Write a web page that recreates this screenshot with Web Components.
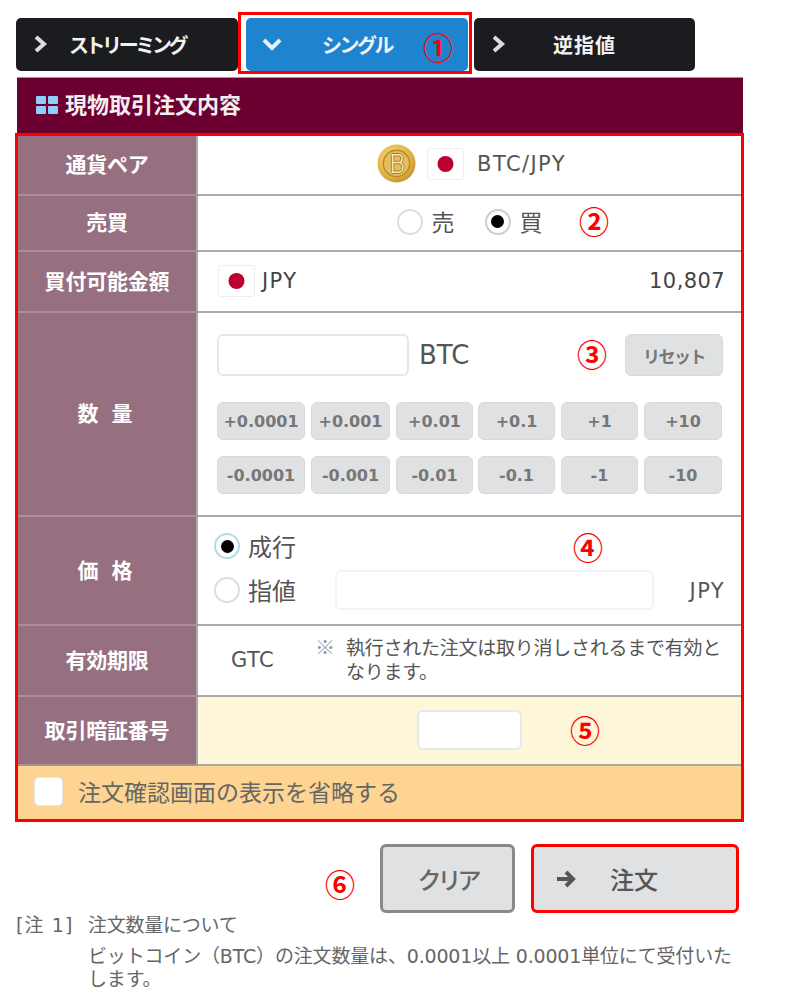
<!DOCTYPE html>
<html lang="ja">
<head>
<meta charset="utf-8">
<title>現物取引注文内容</title>
<style>
  html, body { margin: 0; background: #fff; }
  body { font-family: "DejaVu Sans", "Noto Sans CJK JP", sans-serif; color: #444; width: 800px; height: 990px; overflow: hidden; }
</style>
</head>
<body>
<order-page></order-page>

<script>
const FONT = `"DejaVu Sans", "Noto Sans CJK JP", sans-serif`;
const FLAG = `<svg width="37" height="32" viewBox="0 0 37 32" style="flex:none"><rect x=".5" y=".5" width="36" height="31" rx="2" fill="#fff" stroke="#eee"/><circle cx="18.5" cy="16" r="8" fill="#bc0030"/></svg>`;

class NumMark extends HTMLElement {
  constructor() {
    super();
    this.attachShadow({ mode: "open" });
    this.shadowRoot.innerHTML = `
      <style>
        :host { display: inline-flex; width: 30px; height: 30px; align-items: center; justify-content: center; color: #f00;
          font: 700 30px/30px "Noto Sans CJK JP", sans-serif; flex: none; }
      </style>
      <slot></slot>`;
  }
}
customElements.define("num-mark", NumMark);

class TabButton extends HTMLElement {
  constructor() {
    super();
    this.attachShadow({ mode: "open" });
  }
  connectedCallback() {
    const active = this.hasAttribute("active");
    this.shadowRoot.innerHTML = `
      <style>
        :host { display: block; height: 53px; box-sizing: border-box; border-radius: 5px; background: ${active ? "#1f84d0" : "#1b1c1f"};
          color: #f2f2f2; font: 700 20px/53px "Noto Sans CJK JP", sans-serif; position: relative; }
        svg { position: absolute; left: 17px; top: 17px; }
        .label { position: absolute; left: 0; right: 0; top: 0; text-align: center; letter-spacing: var(--ls, -2.5px); }
      </style>
      ${active
        ? `<svg style="left:15px;top:19px" width="22" height="16" viewBox="0 0 22 16"><path d="M3 3l8 8 8-8" fill="none" stroke="#e6f2fb" stroke-width="4"/></svg>`
        : `<svg width="16" height="18" viewBox="0 0 16 18"><path d="M3 2l8 7-8 7" fill="none" stroke="#ddd" stroke-width="4"/></svg>`}
      <span class="label"><slot></slot></span>`;
  }
}
customElements.define("tab-button", TabButton);

class FormRow extends HTMLElement {
  constructor() {
    super();
    this.attachShadow({ mode: "open" });
  }
  connectedCallback() {
    this.shadowRoot.innerHTML = `
      <style>
        :host { display: grid; grid-template-columns: 180px 1fr; box-sizing: border-box; border-bottom: 2px solid #aaa; height: var(--h); }
        .th { background: #967080; color: #fff; font: 700 21px/1.2 "Noto Sans CJK JP", sans-serif; display: flex; align-items: center;
          justify-content: center; border-right: 2px solid #aaa; box-shadow: 0 2px 0 #ab8e9a; letter-spacing: var(--ls, -.2px); padding-bottom: 2px; }
        .td { min-width: 0; position: relative; background: var(--bg, #fff); }
      </style>
      <div class="th">${this.getAttribute("label")}</div>
      <div class="td"><slot></slot></div>`;
  }
}
customElements.define("form-row", FormRow);

class RadioDot extends HTMLElement {
  constructor() {
    super();
    this.attachShadow({ mode: "open" });
  }
  connectedCallback() {
    const on = this.hasAttribute("checked");
    const ring = this.getAttribute("ring") || (on ? "#ccc" : "#ddd");
    this.shadowRoot.innerHTML = `
      <style>
        :host { display: inline-flex; width: 26px; height: 26px; box-sizing: border-box; border: 2px solid ${ring}; border-radius: 50%;
          background: #fff; align-items: center; justify-content: center; flex: none; }
        i { width: 13px; height: 13px; border-radius: 50%; background: #000; display: ${on ? "block" : "none"}; }
      </style>
      <i></i>`;
  }
}
customElements.define("radio-dot", RadioDot);

class StepButton extends HTMLElement {
  constructor() {
    super();
    this.attachShadow({ mode: "open" });
    this.shadowRoot.innerHTML = `
      <style>
        :host { display: flex; align-items: center; justify-content: center; height: 38px; box-sizing: border-box; background: #e0e1e3;
          border: 1px solid #d8d9db; border-radius: 6px; color: #777; font: 700 16px/1 "DejaVu Sans", sans-serif; padding-top: 2px; }
      </style>
      <slot></slot>`;
  }
}
customElements.define("step-button", StepButton);

class TextBox extends HTMLElement {
  constructor() {
    super();
    this.attachShadow({ mode: "open" });
    this.shadowRoot.innerHTML = `
      <style>
        :host { display: block; box-sizing: border-box; background: #fff; border: 2px solid var(--line, #e8e8e8); border-radius: 6px; flex: none; }
      </style>`;
  }
}
customElements.define("text-box", TextBox);

class OrderPage extends HTMLElement {
  constructor() {
    super();
    this.attachShadow({ mode: "open" });
    this.shadowRoot.innerHTML = `
      <style>
        :host { display: block; padding: 18px 0 0 16px; position: relative; width: 784px; height: 972px; color: #444; font-family: ${FONT}; }
        .tabs { display: grid; grid-template-columns: 222px 222px 219px; column-gap: 8px; width: 680px; }
        .tabs tab-button:nth-child(3) { margin-left: -2px; }
        .head { margin: 6px 0 0 1px; width: 726px; height: 56px; box-sizing: border-box; background: #6b0030; border-top: 1px solid #999;
          color: #f4eef1; display: flex; align-items: center; padding: 0 0 2px 18px; gap: 6px; font: 700 22px/1 "Noto Sans CJK JP", sans-serif; }
        .head svg { flex: none; }
        .head span { margin-top: -3px; }
        .panel { margin: 0 0 0 -1px; width: 729px; box-sizing: border-box; border: 3px solid #f00; }
        .center { height: 100%; display: flex; align-items: center; justify-content: center; }
        .pair { padding-left: 4px; padding-bottom: 3px; box-sizing: border-box; font-size: 21px; letter-spacing: 1.4px; color: #555; }
        .pair svg:first-child { margin-right: 11px; }
        .pair span { margin-left: 13px; }
        .side { font: 400 23px/1 "Noto Sans CJK JP", sans-serif; color: #555; padding-bottom: 3px; box-sizing: border-box; }
        .side span { margin: 0 30px 0 9px; }
        .side span:last-child { margin-right: 0; }
        .avail { height: 100%; box-sizing: border-box; display: flex; align-items: center; padding: 0 16px 2px 20px; font-size: 21px; color: #444; }
        .avail span:first-of-type { margin-left: 7px; flex: 1; letter-spacing: 1.4px; }
        .avail span:last-of-type { letter-spacing: .4px; }
        .qty { padding: 21px 18px 0 19px; }
        .qty-top { display: flex; align-items: center; height: 42px; font-size: 26px; }
        .qty-top text-box { width: 192px; height: 42px; --line: #e6e6e6; }
        .qty-top b { font-weight: 400; margin-left: 10px; flex: 1; color: #555; }
        .reset { width: 98px; height: 42px; box-sizing: border-box; display: flex; align-items: center; justify-content: center; background: #e0e1e3;
          border: 1px solid #d8d9db; border-radius: 6px; color: #777; font: 700 17px/1 "Noto Sans CJK JP", sans-serif; letter-spacing: -1.5px; }
        .steps { display: grid; grid-template-columns: 94px 85px 82px 83px 83px 78px; row-gap: 16px; margin-top: 26px; }
        .steps step-button { margin-right: 6px; }
        .steps step-button:nth-child(6n+3) { margin-right: 5px; }
        .steps step-button:nth-child(6n) { margin-right: 0; }
        .price { padding: 16px 16px 0 16px; font: 400 24px/1 "Noto Sans CJK JP", sans-serif; color: #555; }
        .price div { display: flex; align-items: center; height: 26px; }
        .price div + div { margin-top: 18px; }
        .price span { margin-left: 8px; }
        .price text-box { width: 319px; height: 40px; margin-left: 39px; --line: #f3f3f3; }
        .price em { font: normal 400 21px/1 "DejaVu Sans", sans-serif; letter-spacing: 1.4px; margin-left: auto; margin-top: 2px; color: #555; }
        .term { display: flex; height: 100%; align-items: center; padding-left: 33px; font-size: 21px; color: #555; }
        .term span { padding-bottom: 2px; letter-spacing: .4px; }
        .term small { margin-left: 41px; color: #999; font: 400 20px/24px "Noto Sans CJK JP", sans-serif; align-self: flex-start; margin-top: 9px; }
        .term p { margin: 9px 0 0 11px; align-self: flex-start; font: 400 19px/24px "Noto Sans CJK JP", sans-serif; color: #555; letter-spacing: -.25px; width: 385px; }
        .secret { height: 100%; box-sizing: border-box; display: flex; align-items: center; padding: 0 0 2px 219px; }
        .secret text-box { width: 105px; height: 40px; }
        .confirm { height: 53px; background: #fdd491; display: flex; align-items: center; padding: 0 0 2px 16px; box-sizing: border-box; gap: 15px; font: 400 23px/1 "Noto Sans CJK JP", sans-serif; color: #666; }
        .confirm i { width: 29px; height: 29px; box-sizing: border-box; background: #fff; border: 1px solid #e3e6ec; border-radius: 5px; }
        .actions { display: flex; align-items: center; margin-top: 22px; padding-left: 309px; height: 69px; }
        .actions num-mark { margin-top: 8px; }
        .clear { width: 135px; height: 69px; box-sizing: border-box; background: #e0e1e3; border: 3px solid #8a8a8a; border-radius: 6px; display: flex; align-items: center; justify-content: center;
          color: #666; font: 500 24px/1 "Noto Sans CJK JP", sans-serif; letter-spacing: -4px; margin-left: 25px; }
        .send { width: 208px; height: 69px; box-sizing: border-box; background: #e0e1e3; border: 3px solid #f00; border-radius: 6px; display: flex; align-items: center; margin-left: 16px;
          color: #555; font: 500 24px/1 "Noto Sans CJK JP", sans-serif; padding-left: 21px; }
        .send span { margin-left: 33px; }
        .notes { font: 400 19px/22px ${FONT}; color: #666; letter-spacing: -.25px; margin-top: 1px; }
        .notes .n1 { display: flex; }
        .notes .n1 span { width: 72px; white-space: nowrap; letter-spacing: 1.1px; }
        .notes p { margin: 9px 0 0 72px; width: 648px; letter-spacing: -.17px; line-height: 23px; }
      </style>

      <nav class="tabs">
        <tab-button style="--ls:-3.4px">ストリーミング</tab-button>
        <tab-button active>シングル</tab-button>
        <tab-button style="--ls:1px">逆指値</tab-button>
      </nav>

      <div class="head">
        <svg width="24" height="20" viewBox="0 0 24 20"><g fill="#8fcdfb"><rect x="1" y="1" width="10" height="8" rx="1"/><rect x="13" y="1" width="10" height="8" rx="1"/><rect x="1" y="11" width="10" height="8" rx="1"/><rect x="13" y="11" width="10" height="8" rx="1"/></g></svg>
        <span>現物取引注文内容</span>
      </div>

      <section class="panel">
        <form-row label="通貨ペア" style="--h:60px">
          <div class="center pair">
            <svg width="39" height="39" viewBox="0 0 40 40">
              <defs><radialGradient id="coin" cx=".4" cy=".35" r=".75"><stop offset="0" stop-color="#f8dc80"/><stop offset=".7" stop-color="#e0ad3c"/><stop offset="1" stop-color="#b9852a"/></radialGradient></defs>
              <circle cx="20" cy="20" r="19.5" fill="url(#coin)"/>
              <circle cx="20" cy="20" r="13.5" fill="#e6bd5c" stroke="#b98a2c" stroke-width="1.5"/>
              <path d="M15 11h7c5 0 5 8 0 8h-6m6 0c6 0 6 10 0 10h-7M16 11v18" fill="none" stroke="#a97c24" stroke-width="3.4"/>
              <path d="M15 11h7c5 0 5 8 0 8h-6m6 0c6 0 6 10 0 10h-7M16 11v18" fill="none" stroke="#f9e9b4" stroke-width="1.6"/>
            </svg>
            ${FLAG}
            <span>BTC/JPY</span>
          </div>
        </form-row>
        <form-row label="売買" style="--h:56px">
          <div class="center side">
            <radio-dot></radio-dot><span>売</span>
            <radio-dot checked></radio-dot><span>買</span>
          </div>
        </form-row>
        <form-row label="買付可能金額" style="--h:61px">
          <div class="avail">${FLAG}<span>JPY</span><span>10,807</span></div>
        </form-row>
        <form-row label="数 量" style="--h:204px;--ls:4px">
          <div class="qty">
            <div class="qty-top"><text-box></text-box><b>BTC</b><div class="reset">リセット</div></div>
            <div class="steps">
              <step-button>+0.0001</step-button><step-button>+0.001</step-button><step-button>+0.01</step-button><step-button>+0.1</step-button><step-button>+1</step-button><step-button>+10</step-button>
              <step-button>-0.0001</step-button><step-button>-0.001</step-button><step-button>-0.01</step-button><step-button>-0.1</step-button><step-button>-1</step-button><step-button>-10</step-button>
            </div>
          </div>
        </form-row>
        <form-row label="価 格" style="--h:109px;--ls:4px">
          <div class="price">
            <div><radio-dot checked ring="#b5d9e8"></radio-dot><span>成行</span></div>
            <div><radio-dot></radio-dot><span>指値</span><text-box></text-box><em>JPY</em></div>
          </div>
        </form-row>
        <form-row label="有効期限" style="--h:71px">
          <div class="term"><span>GTC</span><small>※</small><p>執行された注文は取り消しされるまで有効となります。</p></div>
        </form-row>
        <form-row label="取引暗証番号" style="--h:69px;--bg:#fef6d8">
          <div class="secret"><text-box></text-box></div>
        </form-row>
        <div class="confirm"><i></i>注文確認画面の表示を省略する</div>
      </section>

      <div class="actions">
        <num-mark>⑥</num-mark>
        <div class="clear">クリア</div>
        <div class="send"><svg width="22" height="20" viewBox="0 0 22 20"><path d="M2 10h16M11 3l7 7-7 7" fill="none" stroke="#555" stroke-width="4"/></svg><span>注文</span></div>
      </div>

      <div class="notes">
        <div class="n1"><span>[注 1]</span>注文数量について</div>
        <p>ビットコイン（BTC）の注文数量は、0.0001以上 0.0001単位にて受付いたします。</p>
      </div>

      <num-mark style="position:absolute;left:423px;top:31px">①</num-mark>
      <num-mark style="position:absolute;left:579px;top:205px">②</num-mark>
      <num-mark style="position:absolute;left:577px;top:338px">③</num-mark>
      <num-mark style="position:absolute;left:573px;top:531px">④</num-mark>
      <num-mark style="position:absolute;left:570px;top:714px">⑤</num-mark>
      <div style="position:absolute;left:238px;top:12px;width:234px;height:62px;box-sizing:border-box;border:3px solid #f00"></div>
    `;
  }
}
customElements.define("order-page", OrderPage);
</script>
</body>
</html>
